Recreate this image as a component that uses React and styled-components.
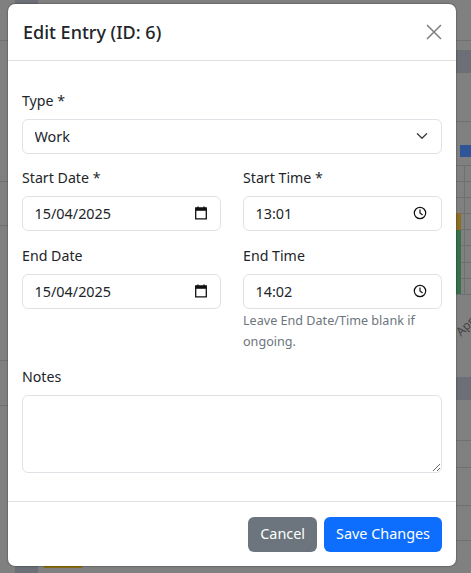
import styled, { createGlobalStyle } from 'styled-components';

const GlobalStyle = createGlobalStyle`
  html, body {
    margin: 0;
    height: 100%;
    overflow: hidden;
    background: #808080;
  }
  #root {
    height: 100%;
  }
  * {
    box-sizing: border-box;
  }
`;

const hLines = [40, 121, 165, 181, 197, 213, 229, 245, 262, 278, 294, 440, 467, 505, 540];
const leftLines = [40, 181, 225, 360, 405];

export default function App() {
  return (
    <Page>
      <GlobalStyle />
      <Behind aria-hidden="true">
        <Band $top={50} />
        <Band $top={377} />
        {hLines.map((y) => <RightLine key={y} $top={y} />)}
        {leftLines.map((y) => <LeftLine key={y} $top={y} />)}
        <ColumnLine />
        <SidePatch $top={0} $height={4} />
        <SidePatch $top={565} $height={8} />
        <LegendBlue />
        <Bar $top={213} $height={17} $color="#8a6f22" />
        <Bar $top={230} $height={64} $color="#37704b" />
        <AxisLabel>Apr</AxisLabel>
        <YellowTag />
      </Behind>

      <Modal>
        <ModalHeader>
          <Title>Edit Entry (ID: 6)</Title>
          <CloseButton aria-label="Close">
            <svg width="16" height="16" viewBox="0 0 16 16" fill="none" stroke="#7f7f7f" strokeWidth="1.5">
              <path d="M1 1l14 14M15 1L1 15" />
            </svg>
          </CloseButton>
        </ModalHeader>

        <ModalBody>
          <Field>
            <Label>Type *</Label>
            <InputWrap>
              <Input readOnly value="Work" />
              <IconSlot $right={12.5}>
                <svg width="16" height="16" viewBox="0 0 16 16" fill="none" stroke="#343a40" strokeWidth="1.3" strokeLinecap="round" strokeLinejoin="round">
                  <path d="M3.4 5.8L8 10.2l4.6-4.4" />
                </svg>
              </IconSlot>
            </InputWrap>
          </Field>

          <Columns>
            <Field>
              <Label>Start Date *</Label>
              <DateInput value="15/04/2025" />
            </Field>
            <Field>
              <Label>Start Time *</Label>
              <TimeInput value="13:01" />
            </Field>
            <Field>
              <Label>End Date</Label>
              <DateInput value="15/04/2025" />
            </Field>
            <Field>
              <Label>End Time</Label>
              <TimeInput value="14:02" />
              <Hint>Leave End Date/Time blank if ongoing.</Hint>
            </Field>
          </Columns>

          <Field>
            <Label>Notes</Label>
            <Notes />
          </Field>
        </ModalBody>

        <ModalFooter>
          <Button $color="#6c757d">Cancel</Button>
          <Button $color="#0d6efd">Save Changes</Button>
        </ModalFooter>
      </Modal>
    </Page>
  );
}

function DateInput({ value }) {
  return (
    <InputWrap>
      <Input readOnly value={value} />
      <IconSlot $right={12}>
        <svg width="16" height="16" viewBox="0 0 16 16" fill="none">
          <path d="M2.7 3h10.6v10.8H2.7z" stroke="#111" strokeWidth="1.3" />
          <path d="M2.7 3h10.6v2.8H2.7z" fill="#111" />
          <path d="M5 1.5v2M11 1.5v2" stroke="#111" strokeWidth="1.4" />
        </svg>
      </IconSlot>
    </InputWrap>
  );
}

function TimeInput({ value }) {
  return (
    <InputWrap>
      <Input readOnly value={value} />
      <IconSlot $right={14.4}>
        <svg width="16" height="16" viewBox="0 0 16 16" fill="none" stroke="#111" strokeWidth="1.2">
          <circle cx="8" cy="8" r="5.7" />
          <path d="M8 4.4V8l2.6 1.9" />
        </svg>
      </IconSlot>
    </InputWrap>
  );
}

const Page = styled.div`
  position: relative;
  height: 100%;
  padding: 4px 15px 0 8px;
  font-family: 'Noto Sans', sans-serif;
  overflow: hidden;
`;

const Behind = styled.div`
  position: absolute;
  inset: 0;
`;

const Band = styled.div`
  position: absolute;
  top: ${(p) => p.$top}px;
  left: 456px;
  right: 0;
  height: 23px;
  background: #6c7076;
`;

const RightLine = styled.div`
  position: absolute;
  top: ${(p) => p.$top}px;
  left: 456px;
  right: 0;
  height: 1px;
  background: #707070;
`;

const LeftLine = styled.div`
  position: absolute;
  top: ${(p) => p.$top}px;
  left: 0;
  width: 8px;
  height: 1px;
  background: #707070;
`;

const ColumnLine = styled.div`
  position: absolute;
  top: 165px;
  left: 464px;
  width: 1px;
  height: 130px;
  background: #707070;
`;

const SidePatch = styled.div`
  position: absolute;
  top: ${(p) => p.$top}px;
  left: 15px;
  width: 23px;
  height: ${(p) => p.$height}px;
  background: #6c7076;
`;

const LegendBlue = styled.div`
  position: absolute;
  top: 145px;
  left: 460px;
  right: 0;
  height: 12px;
  background: #2f5597;
`;

const Bar = styled.div`
  position: absolute;
  top: ${(p) => p.$top}px;
  left: 456px;
  width: 5px;
  height: ${(p) => p.$height}px;
  background: ${(p) => p.$color};
`;

const AxisLabel = styled.div`
  position: absolute;
  top: 318px;
  left: 455px;
  font-size: 12px;
  color: #444;
  transform: rotate(-45deg);
`;

const YellowTag = styled.div`
  position: absolute;
  top: 563px;
  left: 43px;
  width: 40px;
  height: 5px;
  border-radius: 0 0 3px 3px;
  background: #8a6d0a;
`;

const Modal = styled.div`
  position: relative;
  width: 448px;
  height: 562px;
  display: flex;
  flex-direction: column;
  background: #fff;
  border-radius: 7px;
  box-shadow: 0 0 2px rgba(0, 0, 0, 0.6);
  color: #212529;
`;

const ModalHeader = styled.div`
  height: 57px;
  flex: none;
  display: flex;
  align-items: center;
  justify-content: space-between;
  padding: 0 14px 0 15px;
  border-bottom: 1px solid #dee2e6;
`;

const Title = styled.h5`
  margin: 0;
  font-size: 18px;
  font-weight: 500;
  line-height: 1.5;
`;

const CloseButton = styled.button`
  display: flex;
  padding: 0;
  border: 0;
  background: none;
`;

const ModalBody = styled.div`
  flex: 1;
  display: flex;
  flex-direction: column;
  gap: 13.5px;
  padding: 29px 14px 0;
`;

const Field = styled.div`
  display: flex;
  flex-direction: column;
`;

const Label = styled.label`
  font-size: 14.2px;
  line-height: 21px;
  margin-bottom: 8px;
`;

const Columns = styled.div`
  display: grid;
  grid-template-columns: 199px 199px;
  column-gap: 22px;
  row-gap: 14.5px;
`;

const InputWrap = styled.div`
  position: relative;
`;

const Input = styled.input`
  display: block;
  width: 100%;
  height: 34.5px;
  padding: 0 11.5px;
  border: 1px solid #dee2e6;
  border-radius: 6px;
  font-family: inherit;
  font-size: 14.4px;
  color: #212529;
  outline: none;
`;

const IconSlot = styled.span`
  position: absolute;
  top: 9.25px;
  right: ${(p) => p.$right}px;
  display: flex;
  pointer-events: none;
`;

const Hint = styled.div`
  margin-top: 1px;
  font-size: 12.6px;
  line-height: 21.5px;
  color: #6c757d;
`;

const Notes = styled.textarea`
  display: block;
  width: 100%;
  height: 78px;
  border: 1px solid #dee2e6;
  border-radius: 6px;
  outline: none;
`;

const ModalFooter = styled.div`
  height: 65px;
  flex: none;
  display: flex;
  justify-content: flex-end;
  align-items: flex-start;
  gap: 7px;
  padding: 15px 14px 0;
  border-top: 1px solid #dee2e6;
`;

const Button = styled.button`
  height: 34.5px;
  padding: 0 12px 1px;
  border: 0;
  border-radius: 6px;
  background: ${(p) => p.$color};
  color: #fff;
  font-family: inherit;
  font-size: 14.4px;
`;
